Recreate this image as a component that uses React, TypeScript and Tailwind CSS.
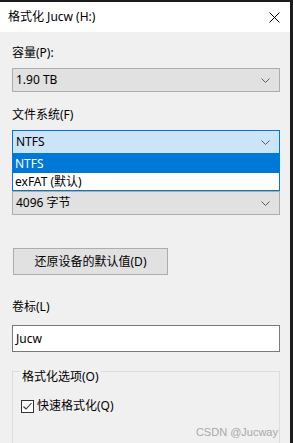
import React from "react";

const font = { fontFamily: '"Noto Sans", "Noto Sans CJK SC", sans-serif' };

function Chevron() {
  return (
    <svg width="9" height="5" viewBox="0 0 9 5" className="shrink-0">
      <path d="M0.5 0.5 L4.5 4.5 L8.5 0.5" fill="none" stroke="#5a5a5a" strokeWidth="1" />
    </svg>
  );
}

function Combo({ text, focused }: { text: string; focused?: boolean }) {
  return (
    <div
      className={
        "h-[24px] w-[268px] flex items-center justify-between pl-[3px] pr-[9px] border " +
        (focused ? "bg-[#cce4f7] border-[#0078d7]" : "bg-[#e1e1e1] border-[#adadad]")
      }
    >
      <span className="text-[12px] leading-[16px] text-black">{text}</span>
      <Chevron />
    </div>
  );
}

export default function App() {
  return (
    <div className="w-[293px] h-[443px] bg-[#1c1c1c] pt-[2px] overflow-hidden" style={font}>
      <div className="w-[290px] h-[441px] bg-[#f0f0f0] flex flex-col overflow-hidden">
        {/* title bar */}
        <div className="h-[30px] bg-white flex items-center justify-between pl-[8px] pr-[10px] shrink-0">
          <span className="text-[12px] leading-[16px] text-black">格式化 Jucw (H:)</span>
          <svg width="11" height="11" viewBox="0 0 11 11">
            <path d="M0.5 0.5 L10.5 10.5 M10.5 0.5 L0.5 10.5" stroke="#000" strokeWidth="1" />
          </svg>
        </div>

        {/* body */}
        <div className="flex flex-col pl-[12px] pt-[13px]">
          <div className="text-[12px] leading-[16px] text-black">容量(P):</div>
          <div className="mt-[7px]">
            <Combo text="1.90 TB" />
          </div>

          <div className="mt-[15px] text-[12px] leading-[16px] text-black">文件系统(F)</div>
          <div className="mt-[7px] relative">
            <Combo text="NTFS" focused />
            <div className="absolute left-0 top-[24px] w-[268px] z-10 bg-white border border-t-0 border-[#0078d7]">
              <div className="h-[19px] bg-[#0078d7] text-white text-[12px] leading-[19px] pl-[2px]">NTFS</div>
              <div className="h-[17px] bg-white text-black text-[12px] leading-[17px] pl-[2px]">exFAT (默认)</div>
            </div>
          </div>

          {/* label hidden under the open dropdown list */}
          <div className="mt-[15px] h-[16px]" />
          <div className="mt-[6px]">
            <Combo text="4096 字节" />
          </div>

          <div className="mt-[33px] ml-[1px] w-[155px] h-[27px] bg-[#e1e1e1] border border-[#adadad] flex items-center justify-center">
            <span className="text-[12px] leading-[16px] text-black">还原设备的默认值(D)</span>
          </div>

          <div className="mt-[24px] text-[12px] leading-[16px] text-black">卷标(L)</div>
          <div className="mt-[10px] w-[268px] h-[27px] bg-white border border-[#7a7a7a] flex items-center pl-[3px]">
            <span className="text-[12px] leading-[16px] text-black">Jucw</span>
          </div>

          <div className="relative mt-[19px] w-[268px] h-[80px] border border-[#dcdcdc]">
            <span className="absolute left-[7px] top-[-3px] bg-[#f0f0f0] px-[2px] text-[12px] leading-[16px] text-black">
              格式化选项(O)
            </span>
            <div className="flex items-center mt-[26px] ml-[8px]">
              <div className="w-[13px] h-[13px] border border-[#333] bg-white flex items-center justify-center">
                <svg width="11" height="11" viewBox="0 0 11 11">
                  <path d="M1.5 5.5 L4 8 L9.5 2" fill="none" stroke="#333" strokeWidth="1.1" />
                </svg>
              </div>
              <span className="ml-[3px] text-[12px] leading-[16px] text-black">快速格式化(Q)</span>
            </div>
            <div className="flex justify-end pr-[1px] mt-[11px]">
              <span className="text-[11px] leading-[14px] text-[#a8a8a8]" style={{ fontFamily: '"Liberation Sans", Arial, sans-serif' }}>
                CSDN @Jucway
              </span>
            </div>
          </div>
        </div>
      </div>
    </div>
  );
}
